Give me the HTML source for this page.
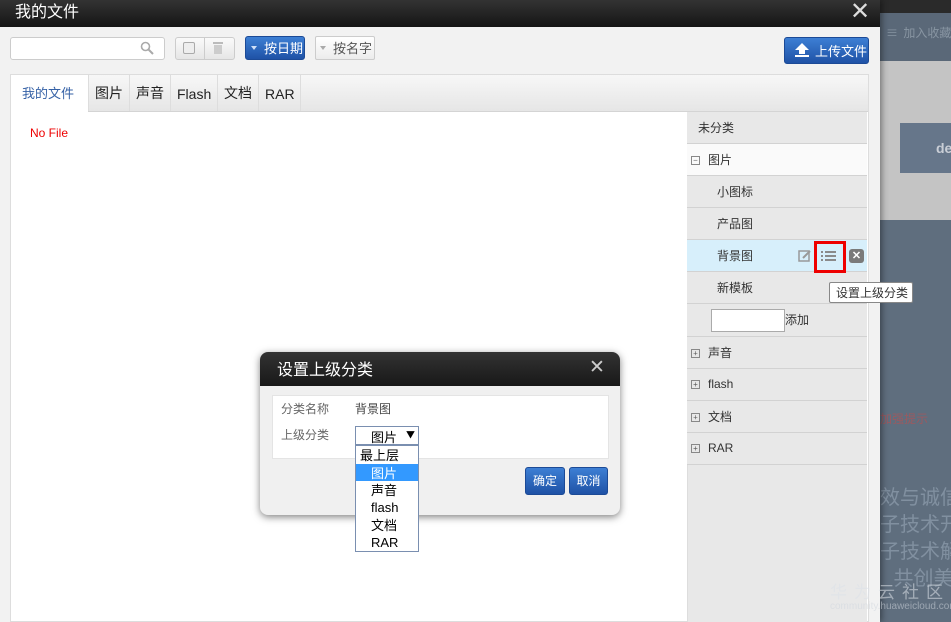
<!DOCTYPE html>
<html><head><meta charset="utf-8"><style>
*{box-sizing:border-box;margin:0;padding:0}
body{width:951px;height:622px;overflow:hidden;position:relative;background:#5f6e7e;font-family:"Liberation Sans","Noto Sans CJK SC",sans-serif;font-size:12px;color:#333}
.abs{position:absolute}
.cjk{font-family:"Noto Sans CJK SC","WenQuanYi Zen Hei",sans-serif}
.btnb{background:linear-gradient(#3d7fd4,#1f52a6);color:#fff;border-radius:3px;border:1px solid #1c4a96}
.row{position:absolute;left:687px;width:180px;height:32px;border-bottom:1px solid #d2d2d2;background:#e8e8e8;font-size:12px;line-height:31px}
.pm{display:inline-block;width:9px;height:9px;border:1px solid #888;font-size:8px;line-height:7px;text-align:center;margin:0 8px 0 4px;vertical-align:middle;color:#555}
</style></head><body>
<div class="abs" style="left:880px;top:0;width:71px;height:13px;background:#2a2a2a"></div>
<div class="abs" style="left:880px;top:13px;width:71px;height:48px;background:#5a6878"></div>
<div class="abs cjk" style="left:886px;top:24px;color:#8895a2;font-size:12px;white-space:nowrap">≡&nbsp; 加入收藏</div>
<div class="abs" style="left:880px;top:61px;width:71px;height:159px;background:#c4c4c4"></div>
<div class="abs" style="left:900px;top:123px;width:51px;height:50px;background:#66768a;color:#c9ced6;font-weight:bold;font-size:14px;line-height:50px;padding-left:36px">de</div>
<div class="abs cjk" style="left:880px;top:410px;color:#9a5a60;font-size:12px;white-space:nowrap">加强提示</div>
<div class="abs cjk" style="left:880px;top:482px;color:#8190a0;font-size:20px;line-height:27px;white-space:nowrap">效与诚信<br>子技术开<br>子技术解<br>&nbsp;&nbsp;&nbsp;共创美</div>

<div class="abs" style="left:0;top:0;width:880px;height:622px;background:#f2f2f2;box-shadow:2px 0 6px rgba(0,0,0,.4)"></div>
<div class="abs" style="left:0;top:0;width:880px;height:27px;background:linear-gradient(#333,#151515)"></div>
<div class="abs cjk" style="left:15px;top:-2px;color:#fff;font-size:16px">我的文件</div>
<div class="abs" style="left:850px;top:-3px;color:#ddd;font-size:24px">✕</div>

<div class="abs" style="left:10px;top:37px;width:155px;height:23px;background:#fff;border:1px solid #ccc;border-radius:3px"></div>
<svg class="abs" style="left:140px;top:41px" width="14" height="14"><circle cx="5.5" cy="5.5" r="4" fill="none" stroke="#aaa" stroke-width="1.6"/><line x1="8.5" y1="8.5" x2="13" y2="13" stroke="#aaa" stroke-width="2"/></svg>
<div class="abs" style="left:175px;top:37px;width:60px;height:23px;background:linear-gradient(#fafafa,#e6e6e6);border:1px solid #ccc;border-radius:3px"></div>
<div class="abs" style="left:204px;top:37px;width:1px;height:23px;background:#ccc"></div>
<div class="abs" style="left:183px;top:42px;width:12px;height:12px;border:1px solid #aaa;border-radius:2px;background:#eee"></div>
<svg class="abs" style="left:212px;top:41px" width="12" height="14"><rect x="1" y="1" width="10" height="2" fill="#bbb"/><rect x="2" y="4" width="8" height="9" fill="#ccc"/></svg>
<div class="abs btnb cjk" style="left:245px;top:36px;width:60px;height:24px;line-height:22px;font-size:13px;padding-left:18px">按日期</div>
<div class="abs" style="left:251px;top:46px;border:3px solid transparent;border-top:4px solid #cfe0f7"></div>
<div class="abs cjk" style="left:315px;top:36px;width:60px;height:24px;line-height:22px;font-size:13px;padding-left:17px;background:linear-gradient(#fff,#ececec);border:1px solid #ccc;border-radius:2px;color:#555">按名字</div>
<div class="abs" style="left:320px;top:46px;border:3px solid transparent;border-top:4px solid #aaa"></div>
<div class="abs btnb cjk" style="left:784px;top:37px;width:85px;height:27px;line-height:25px;font-size:13px;padding-left:30px">上传文件</div>
<svg class="abs" style="left:794px;top:42px" width="16" height="16"><path d="M8 1 L15 8 H11 V12 H5 V8 H1 Z" fill="#fff"/><rect x="1" y="13" width="14" height="2" fill="#fff"/></svg>

<div class="abs" style="left:10px;top:74px;width:859px;height:548px;background:#fff;border:1px solid #ddd"></div>
<div class="abs" style="left:11px;top:75px;width:857px;height:37px;background:linear-gradient(#f7f7f7,#e6e6e6);border-bottom:1px solid #d4d4d4"></div>
<div class="abs" style="left:11px;top:75px;width:77px;height:37px;background:#fff"></div>
<div class="abs cjk" style="left:22px;top:83px;color:#3561a6;font-size:13px">我的文件</div>
<div class="abs" style="left:88px;top:75px;width:1px;height:36px;background:#ddd"></div>
<div class="abs cjk" style="left:95px;top:83px;font-size:14px;color:#222">图片</div>
<div class="abs" style="left:129px;top:75px;width:1px;height:36px;background:#ddd"></div>
<div class="abs cjk" style="left:136px;top:83px;font-size:14px;color:#222">声音</div>
<div class="abs" style="left:170px;top:75px;width:1px;height:36px;background:#ddd"></div>
<div class="abs" style="left:177px;top:86px;font-size:14px;color:#222">Flash</div>
<div class="abs" style="left:217px;top:75px;width:1px;height:36px;background:#ddd"></div>
<div class="abs cjk" style="left:224px;top:83px;font-size:14px;color:#222">文档</div>
<div class="abs" style="left:258px;top:75px;width:1px;height:36px;background:#ddd"></div>
<div class="abs" style="left:265px;top:86px;font-size:14px;color:#222">RAR</div>
<div class="abs" style="left:300px;top:75px;width:1px;height:36px;background:#ddd"></div>
<div class="abs" style="left:30px;top:126px;color:#e00;font-size:12px">No File</div>

<div class="abs" style="left:687px;top:112px;width:180px;height:510px;background:#e8e8e8;border-left:1px solid #ddd"></div>
<div class="row cjk" style="top:112px;padding-left:11px">未分类</div>
<div class="row cjk" style="top:144px;background:#fafafa"><span class="pm">−</span>图片</div>
<div class="row cjk" style="top:176px;padding-left:30px">小图标</div>
<div class="row cjk" style="top:208px;padding-left:30px">产品图</div>
<div class="row cjk" style="top:240px;padding-left:30px;background:#d7effb">背景图</div>
<div class="row cjk" style="top:272px;padding-left:30px">新模板</div>
<div class="row cjk" style="top:304px;height:33px;padding-left:24px"><span style="display:inline-block;width:74px;height:23px;background:#fff;border:1px solid #aaa;vertical-align:middle"></span>添加</div>
<div class="row cjk" style="top:337px"><span class="pm">+</span>声音</div>
<div class="row" style="top:369px"><span class="pm">+</span>flash</div>
<div class="row cjk" style="top:401px"><span class="pm">+</span>文档</div>
<div class="row" style="top:433px"><span class="pm">+</span>RAR</div>
<svg class="abs" style="left:798px;top:249px" width="14" height="14"><rect x="1" y="2" width="10" height="10" fill="none" stroke="#999" stroke-width="1.5"/><path d="M5 9 L12 2" stroke="#999" stroke-width="2"/></svg>
<div class="abs" style="left:814px;top:241px;width:32px;height:32px;border:3px solid #e00"></div>
<svg class="abs" style="left:821px;top:249px" width="16" height="14"><g fill="#8a8a8a"><rect x="0" y="2" width="2" height="2"/><rect x="4" y="2" width="11" height="2"/><rect x="0" y="6" width="2" height="2"/><rect x="4" y="6" width="11" height="2"/><rect x="0" y="10" width="2" height="2"/><rect x="4" y="10" width="11" height="2"/></g></svg>
<div class="abs" style="left:849px;top:249px;width:15px;height:14px;background:#7a7a7a;border-radius:3px;color:#fff;font-size:11px;font-weight:bold;line-height:14px;text-align:center">✕</div>
<div class="abs cjk" style="left:829px;top:282px;width:84px;height:21px;background:#fff;border:1px solid #888;border-radius:2px;font-size:12px;line-height:19px;padding-left:6px;color:#333;white-space:nowrap">设置上级分类</div>

<div class="abs" style="left:260px;top:352px;width:360px;height:163px;background:#f0f0f0;border-radius:8px;box-shadow:0 2px 8px rgba(0,0,0,.5);overflow:hidden">
  <div style="height:34px;background:linear-gradient(#333,#181818)"></div>
</div>
<div class="abs cjk" style="left:277px;top:356px;color:#fff;font-size:16px">设置上级分类</div>
<div class="abs" style="left:589px;top:356px;color:#ccc;font-size:19px">✕</div>
<div class="abs" style="left:272px;top:395px;width:337px;height:64px;background:#fff;border:1px solid #e4e4e4"></div>
<div class="abs cjk" style="left:281px;top:400px;color:#666;font-size:12px">分类名称</div>
<div class="abs cjk" style="left:355px;top:400px;color:#444;font-size:12px">背景图</div>
<div class="abs cjk" style="left:281px;top:426px;color:#666;font-size:12px">上级分类</div>
<div class="abs cjk" style="left:355px;top:426px;width:64px;height:19px;border:1px solid #7a8fb0;background:#fff;font-size:13px;line-height:19px;padding-left:15px;color:#000">图片<span style="position:absolute;left:50px;top:-2px;font-size:9px">▼</span></div>
<div class="abs cjk" style="left:355px;top:445px;width:64px;height:107px;border:1px solid #7a8fb0;background:#fff;font-size:13px;line-height:17.5px;color:#000">
<div style="padding-left:4px">最上层</div><div style="padding-left:15px;background:#3399ff;color:#fff">图片</div><div style="padding-left:15px">声音</div><div style="padding-left:15px;font-family:'Liberation Sans',sans-serif">flash</div><div style="padding-left:15px">文档</div><div style="padding-left:15px;font-family:'Liberation Sans',sans-serif">RAR</div></div>
<div class="abs btnb cjk" style="left:525px;top:467px;width:40px;height:28px;line-height:26px;text-align:center;font-size:12px">确定</div>
<div class="abs btnb cjk" style="left:569px;top:467px;width:39px;height:28px;line-height:26px;text-align:center;font-size:12px">取消</div>

<div class="abs cjk" style="left:830px;top:578px;color:#dde2e8;opacity:.55;font-size:17px;letter-spacing:7px;white-space:nowrap">华为云社区</div>
<div class="abs" style="left:830px;top:601px;color:#d0d6de;opacity:.55;font-size:10px;white-space:nowrap">community.huaweicloud.com</div>
</body></html>
